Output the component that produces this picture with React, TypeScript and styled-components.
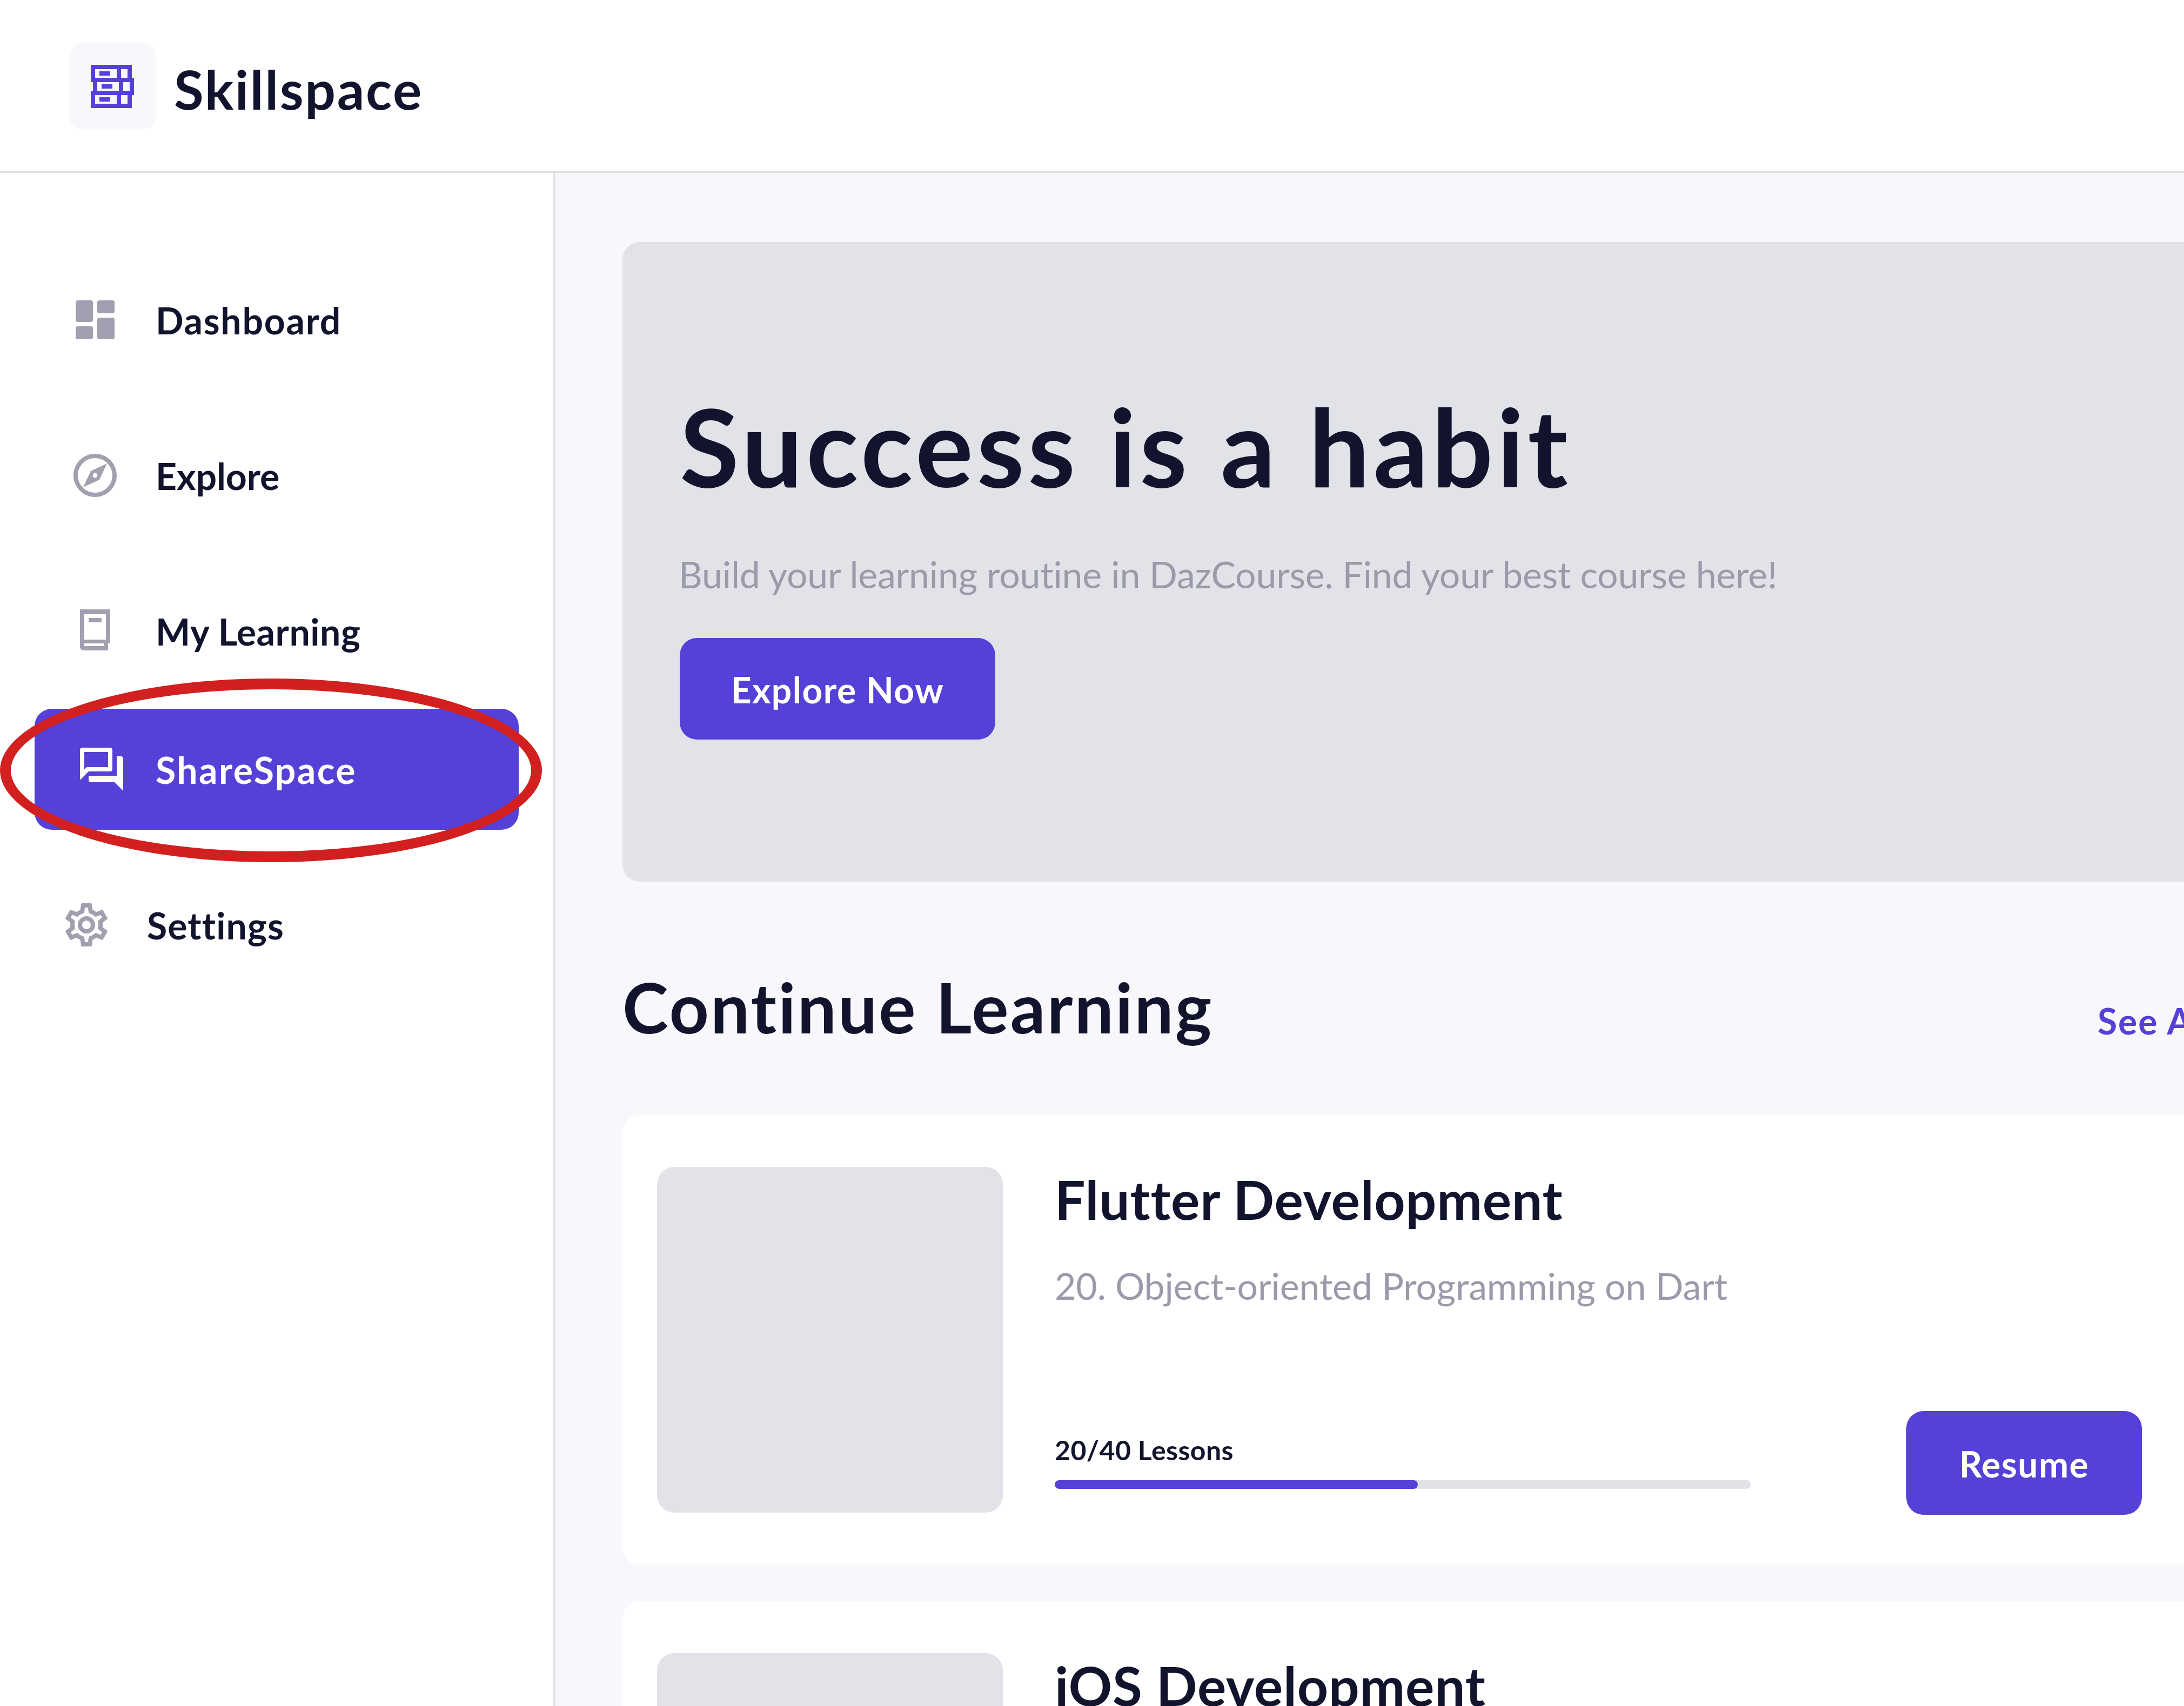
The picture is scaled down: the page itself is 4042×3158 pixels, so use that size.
import React from "react";
import styled, { createGlobalStyle } from "styled-components";
import { MdOutlineExplore, MdOutlineQuestionAnswer, MdOutlineSettings } from "react-icons/md";

const Global = createGlobalStyle`
  html, body { margin: 0; padding: 0; background: #fff; overflow: hidden; }
  * { box-sizing: border-box; }
  body {
    font-family: "Lato", "Noto Sans", sans-serif;
    font-variant-ligatures: none;
    color: #12142d;
  }
`;

const Page = styled.div`
  position: relative;
  width: 4042px;
  height: 3158px;
  overflow: hidden;
  display: flex;
  flex-direction: column;
`;

const Header = styled.header`
  flex: none;
  height: 320px;
  display: flex;
  align-items: flex-start;
  gap: 34px;
  padding: 80px 128px 0;
  background: #fff;
  border-bottom: 4px solid #e0e0e0;
`;

const LogoBox = styled.div`
  width: 160px;
  height: 160px;
  border-radius: 24px;
  background: #f8f8fc;
  display: flex;
  align-items: center;
  justify-content: center;
`;

const Brand = styled.h1`
  margin: 4px 0 0;
  font-size: 100px;
  line-height: 160px;
  font-weight: 700;
  letter-spacing: 2.6px;
  color: #12142d;
`;

const Body = styled.div`
  flex: 1;
  display: flex;
  min-height: 0;
`;

const Sidebar = styled.nav`
  flex: none;
  width: 1028px;
  background: #fff;
  border-right: 4px solid #e0e0e6;
  padding: 160px 64px 0;
  display: flex;
  flex-direction: column;
`;

const NavItem = styled.div<{ $active?: boolean; $pad: number; $gap: number; $top: number; $ls: number }>`
  height: 224px;
  margin-top: ${(p) => p.$top}px;
  display: flex;
  align-items: center;
  gap: ${(p) => p.$gap}px;
  padding-left: ${(p) => p.$pad}px;
  border-radius: 32px;
  font-size: 68px;
  font-weight: 700;
  letter-spacing: ${(p) => p.$ls}px;
  background: ${(p) => (p.$active ? "#5541d7" : "transparent")};
  color: ${(p) => (p.$active ? "#fff" : "#12142d")};
  svg { flex: none; width: 96px; height: 96px; color: ${(p) => (p.$active ? "#fff" : "#a0a0b0")}; }
`;

const Main = styled.main`
  flex: none;
  width: 3014px;
  background: #f8f8fc;
  padding: 128px 0 0 124px;
  display: flex;
  flex-direction: column;
`;

const Hero = styled.section`
  flex: none;
  width: 3100px;
  height: 1184px;
  border-radius: 32px;
  background: #e2e3e8;
  padding: 0 0 0 104px;
  display: flex;
  flex-direction: column;
  align-items: flex-start;
`;

const HeroTitle = styled.h2`
  margin: 257px 0 0 2px;
  font-size: 200px;
  line-height: 240px;
  font-weight: 700;
  letter-spacing: 6.6px;
  color: #12142d;
`;

const HeroText = styled.p`
  margin: 74px 0 0;
  font-size: 68px;
  line-height: 88px;
  letter-spacing: -0.2px;
  color: #9a9aaa;
`;

const Button = styled.div<{ $w: number; $h: number }>`
  flex: none;
  width: ${(p) => p.$w}px;
  height: ${(p) => p.$h}px;
  padding-top: 2px;
  border-radius: 32px;
  background: #5541d7;
  color: #fff;
  font-size: 66px;
  font-weight: 700;
  letter-spacing: 1.4px;
  display: flex;
  align-items: center;
  justify-content: center;
`;

const HeroButton = styled(Button)`
  margin: 74px 0 0 2px;
`;

const SectionHead = styled.div`
  flex: none;
  height: 432px;
  padding-top: 152px;
  display: flex;
  justify-content: space-between;
  align-items: flex-start;
  width: 2943px;
`;

const SectionTitle = styled.h3`
  margin: 0;
  font-size: 128px;
  line-height: 160px;
  font-weight: 700;
  letter-spacing: 3.1px;
  color: #12142d;
`;

const SeeAll = styled.span`
  margin-top: 62px;
  font-size: 66px;
  line-height: 88px;
  font-weight: 700;
  letter-spacing: 2px;
  color: #5541d7;
`;

const Cards = styled.div`
  display: flex;
  flex-direction: column;
  gap: 68px;
`;

const Card = styled.article`
  flex: none;
  width: 3100px;
  height: 832px;
  border-radius: 32px;
  background: #fff;
  padding: 96px 0 0 64px;
  display: flex;
  gap: 96px;
`;

const Thumb = styled.div`
  flex: none;
  width: 640px;
  height: 640px;
  border-radius: 32px;
  background: #e2e3e8;
`;

const CardBody = styled.div`
  flex: none;
  width: 2012px;
  height: 644px;
  display: flex;
  flex-direction: column;
`;

const CardTitle = styled.h4`
  margin: -5px 0 0;
  font-size: 100px;
  line-height: 128px;
  font-weight: 700;
  letter-spacing: 0.8px;
  color: #12142d;
`;

const CardSub = styled.p`
  margin: 53px 0 0;
  font-size: 68px;
  line-height: 88px;
  letter-spacing: -0.1px;
  color: #9a9aaa;
`;

const CardFoot = styled.div`
  margin-top: auto;
  display: flex;
  justify-content: space-between;
  align-items: flex-end;
`;

const Progress = styled.div`
  width: 1288px;
  padding-bottom: 48px;
`;

const ProgressLabel = styled.div`
  font-size: 50px;
  line-height: 64px;
  font-weight: 700;
  letter-spacing: 0.4px;
  color: #12142d;
  margin-bottom: 24px;
`;

const Track = styled.div`
  height: 16px;
  border-radius: 8px;
  background: #e2e3e8;
  overflow: hidden;
`;

const Fill = styled.div<{ $w: number }>`
  width: ${(p) => p.$w}px;
  height: 100%;
  border-radius: 8px;
  background: #5541d7;
`;

const Ring = styled.div`
  position: absolute;
  left: 0;
  top: 1256px;
  width: 1003px;
  height: 340px;
  border: 20px solid #d22020;
  border-radius: 50%;
  pointer-events: none;
`;

const LogoIcon = () => (
  <svg width="80" height="80" viewBox="0 0 80 80" fill="none">
    {[
      [0, 0],
      [4, 24],
      [0, 48],
    ].map(([x, y]) => (
      <g key={y} transform={`translate(${x} ${y})`}>
        <path
          fillRule="evenodd"
          fill="#5541d7"
          d="M0 0h76v32H0zM8 8v16h40V8zM56 8v16h12V8z"
        />
        <rect x="16" y="12" width="20" height="8" fill="#5541d7" />
      </g>
    ))}
  </svg>
);

const DashboardIcon = () => (
  <svg viewBox="0 0 96 96" fill="currentColor">
    <rect x="12" y="12" width="32" height="40" rx="4" />
    <rect x="52" y="12" width="32" height="24" rx="4" />
    <rect x="12" y="60" width="32" height="24" rx="4" />
    <rect x="52" y="44" width="32" height="40" rx="4" />
  </svg>
);

const BookIcon = () => (
  <svg viewBox="0 0 96 96" fill="currentColor">
    <path
      fillRule="evenodd"
      d="M20 8h56v62h-4v14H27c-4 0-7-3-7-7zM28 17v47h40V17zM36 24v8h24v-8zM28 71v5h36v-5z"
    />
  </svg>
);

export default function App() {
  return (
    <>
      <Global />
      <Page>
        <Header>
          <LogoBox>
            <LogoIcon />
          </LogoBox>
          <Brand>Skillspace</Brand>
        </Header>
        <Body>
          <Sidebar>
            <NavItem $pad={64} $gap={64} $top={0} $ls={1.7}>
              <DashboardIcon />
              Dashboard
            </NavItem>
            <NavItem $pad={64} $gap={64} $top={64} $ls={-0.1}>
              <MdOutlineExplore />
              Explore
            </NavItem>
            <NavItem $pad={64} $gap={64} $top={64} $ls={0.5}>
              <BookIcon />
              My Learning
            </NavItem>
            <NavItem $active $pad={76} $gap={52} $top={32} $ls={2.4}>
              <MdOutlineQuestionAnswer />
              ShareSpace
            </NavItem>
            <NavItem $pad={48} $gap={64} $top={64} $ls={1.1}>
              <MdOutlineSettings />
              Settings
            </NavItem>
          </Sidebar>
          <Main>
            <Hero>
              <HeroTitle>Success is a habit</HeroTitle>
              <HeroText>Build your learning routine in DazCourse. Find your best course here!</HeroText>
              <HeroButton $w={584} $h={188}>Explore Now</HeroButton>
            </Hero>
            <SectionHead>
              <SectionTitle>Continue Learning</SectionTitle>
              <SeeAll>See All</SeeAll>
            </SectionHead>
            <Cards>
              <Card>
                <Thumb />
                <CardBody>
                  <CardTitle>Flutter Development</CardTitle>
                  <CardSub>20. Object-oriented Programming on Dart</CardSub>
                  <CardFoot>
                    <Progress>
                      <ProgressLabel>20/40 Lessons</ProgressLabel>
                      <Track>
                        <Fill $w={672} />
                      </Track>
                    </Progress>
                    <Button $w={436} $h={192}>Resume</Button>
                  </CardFoot>
                </CardBody>
              </Card>
              <Card>
                <Thumb />
                <CardBody>
                  <CardTitle>iOS Development</CardTitle>
                </CardBody>
              </Card>
            </Cards>
          </Main>
        </Body>
        <Ring />
      </Page>
    </>
  );
}
